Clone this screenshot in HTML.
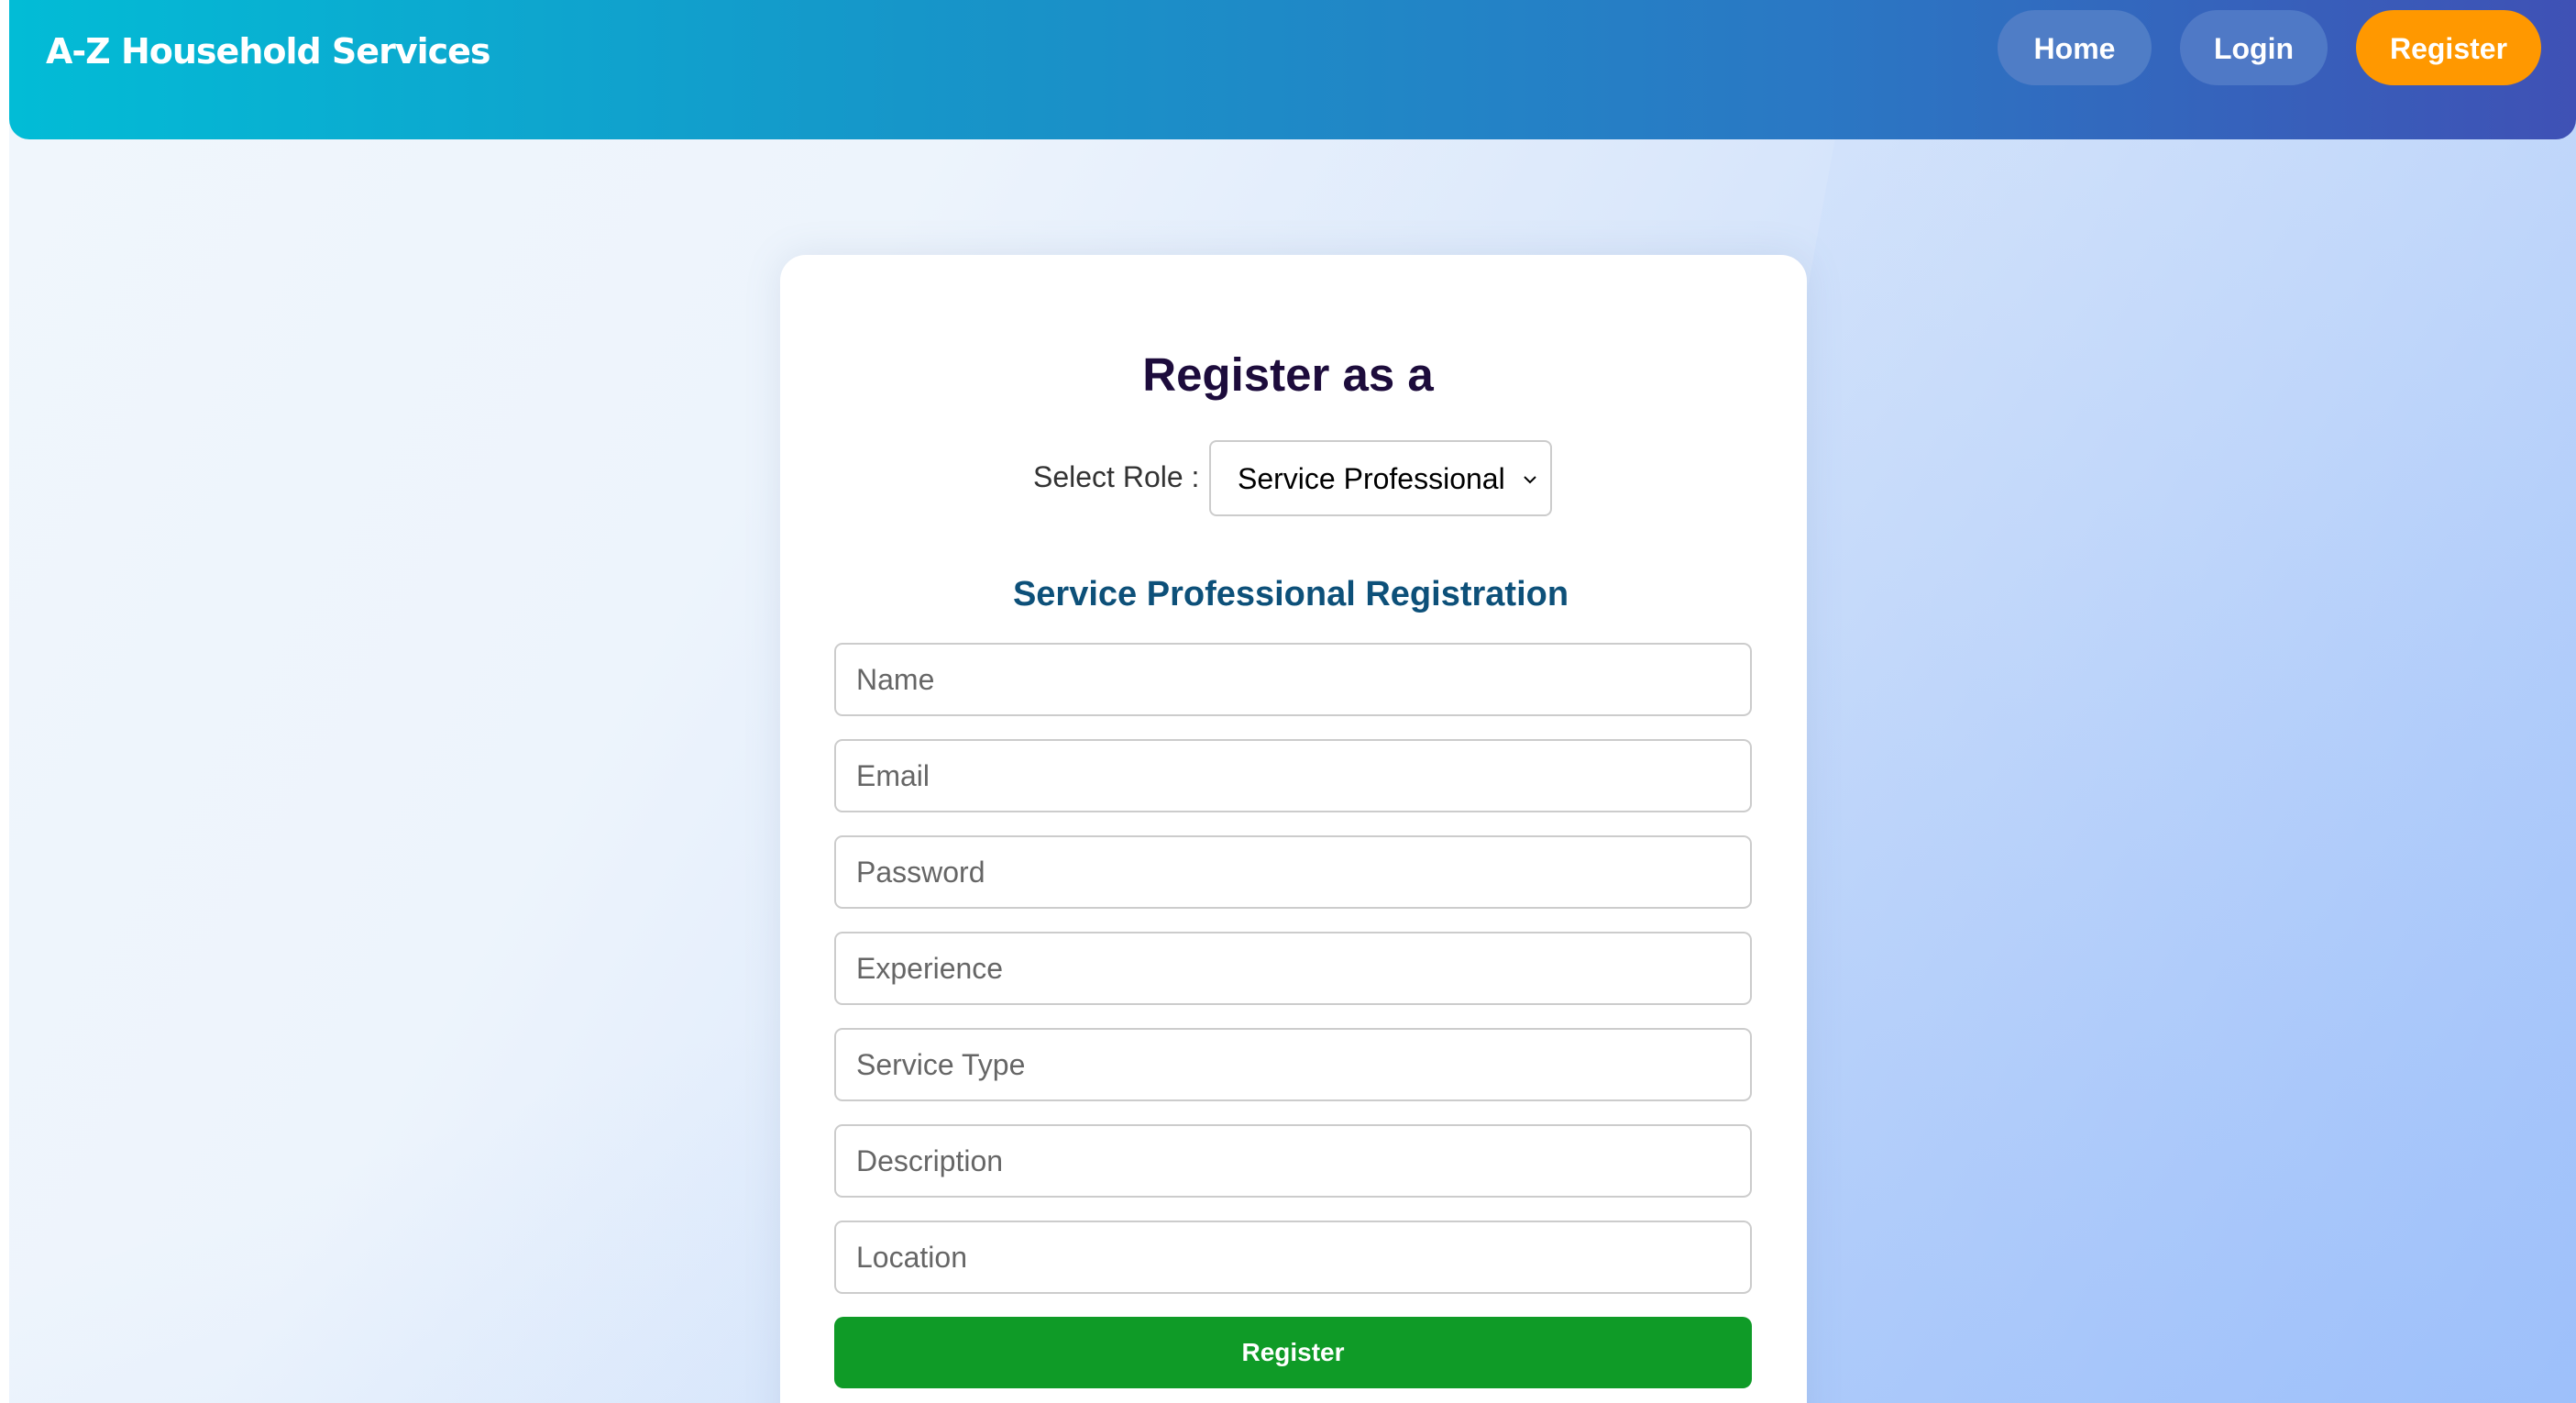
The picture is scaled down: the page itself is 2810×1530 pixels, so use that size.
<!DOCTYPE html>
<html><head><meta charset="utf-8"><style>
*{box-sizing:border-box;margin:0;padding:0}
html,body{width:2810px;height:1530px;overflow:hidden}
body{position:relative;background:#fff;font-family:"Liberation Sans",Arial,sans-serif}
.bg{position:absolute;left:10px;top:0;width:2800px;height:1530px;
background:
linear-gradient(160deg,rgba(255,255,255,0) 55%,rgba(160,195,250,.3) 100%),
linear-gradient(120deg,#f0f6fc 0%,#edf4fc 30%,#dbe8fb 52%,#c4d9fa 75%,#a9c7fa 100%);}
.poly2{position:absolute;left:1800px;top:150px;width:1010px;height:1380px;background:linear-gradient(170deg,rgba(200,220,250,.25),rgba(140,180,250,.35));clip-path:polygon(20% 0,100% 0,100% 100%,0 100%,10% 40%)}
header{position:absolute;left:10px;top:0;width:2800px;height:152px;border-radius:0 0 22px 22px;
background:linear-gradient(90deg,#02bcd6 0%,#1696c9 35%,#2a78c4 70%,#3f51b5 100%);}
.logo{position:absolute;left:40px;top:30px;font-family:"DejaVu Sans",sans-serif;font-weight:bold;font-size:38px;color:#fff;line-height:52px;letter-spacing:-1px}
.nb{position:absolute;top:11px;height:82px;border-radius:41px;color:#fff;font-weight:bold;font-size:32px;display:flex;align-items:center;justify-content:center;padding-top:2px}
.card{position:absolute;left:851px;top:278px;width:1120px;height:1300px;background:#fff;border-radius:28px;box-shadow:0 0 40px rgba(100,130,170,.15)}
h1{position:absolute;left:0;width:100%;top:378px;text-align:center;font-size:51px;font-weight:bold;color:#1d0c3c;line-height:62px}
.lbl{position:absolute;left:1127px;top:500px;font-size:32px;color:#333;line-height:40px}
.sel{position:absolute;left:1319px;top:480px;width:374px;height:83px;border:2px solid #ccc;border-radius:8px;background:#fff}
.sel span{position:absolute;left:29px;top:20px;font-size:32px;color:#000;line-height:40px}
.sel svg{position:absolute;right:14px;top:35px}
h2{position:absolute;left:0;width:100%;top:624px;text-align:center;font-size:38px;font-weight:bold;color:#0d5079;line-height:48px;padding-left:6px}
.in{position:absolute;left:910px;width:1001px;height:80px;border:2px solid #ccc;border-radius:9px;background:#fff;font-size:32px;color:#666;padding-left:22px;line-height:76px}
.btn{position:absolute;left:910px;top:1436px;width:1001px;height:78px;background:#0f9b27;border-radius:10px;color:#fff;font-weight:bold;font-size:28px;text-align:center;line-height:78px}
</style></head><body>
<div class="bg"></div><div class="poly2"></div>
<header>
<div class="logo">A-Z Household Services</div>
</header>
<div class="nb" style="left:2179px;width:168px;background:#4f7dc6">Home</div>
<div class="nb" style="left:2378px;width:161px;background:#4f79c6">Login</div>
<div class="nb" style="left:2570px;width:202px;background:#ff9800">Register</div>
<div class="card"></div>
<h1>Register as a</h1>
<div class="lbl">Select Role :</div>
<div class="sel"><span>Service Professional</span><svg width="16" height="12" viewBox="0 0 16 12"><path d="M2 3 L8 9 L14 3" stroke="#000" stroke-width="2" fill="none"/></svg></div>
<h2>Service Professional Registration</h2>
<div class="in" style="top:701px">Name</div>
<div class="in" style="top:806px">Email</div>
<div class="in" style="top:911px">Password</div>
<div class="in" style="top:1016px">Experience</div>
<div class="in" style="top:1121px">Service Type</div>
<div class="in" style="top:1226px">Description</div>
<div class="in" style="top:1331px">Location</div>
<div class="btn">Register</div>
</body></html>
